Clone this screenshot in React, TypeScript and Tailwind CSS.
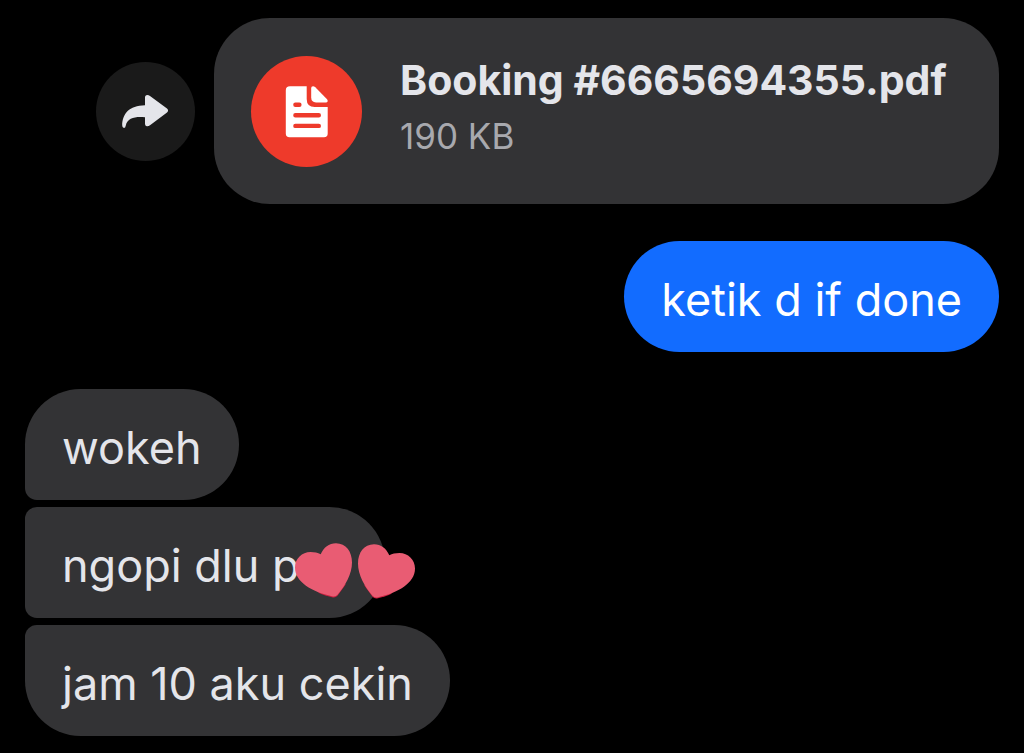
import type { ReactNode } from 'react';
import clsx from 'clsx';

interface BubbleProps {
  children: ReactNode;
  className?: string;
}

function ShareIcon() {
  return (
    <svg viewBox="12 14 48 35" className="h-[35px] w-12" fill="#e4e5ea" aria-hidden="true">
      <path d="M35 17.6Q35 15 37.3 15Q38.6 15 40 16L57 28.6Q59.2 30.5 57 32.5L40 45.3Q38.4 46.4 36.8 46.2Q35 45.8 35 44V37.2C26 36.2 17.4 37.5 15.8 45.5Q15.4 48 13.9 48Q12.2 48 12.2 45.2C12.4 34 19 25.4 35 25.2Z" />
    </svg>
  );
}

function DocumentIcon() {
  return (
    <svg viewBox="15 9 44 54" className="h-[54px] w-11" aria-hidden="true">
      <path
        fill="#fff"
        d="M20 11.3H36.7V24Q36.7 32 44.7 32H57.7V58.5Q57.7 62.3 54 62.3H19.6Q15.8 62.3 15.8 58.5V15.3Q15.8 11.3 20 11.3Z"
      />
      <path
        fill="#fff"
        d="M41.2 13Q41.2 11.3 43 11.3Q44.2 11.3 45.3 12.3L56.8 24Q57.7 25 57.7 26Q57.7 27.4 56.2 27.4H46Q41.2 27.4 41.2 22.6Z"
      />
      <path stroke="#ee3a2b" strokeWidth="4.4" strokeLinecap="round" d="M25.4 29.8H29.4M25.4 40.2H48.8M25.4 50.9H48.8" />
    </svg>
  );
}

function Heart() {
  return (
    <>
      <path fill="#c91f3f" d="M52 42L43.5 53.8Q41.5 56 38 55.2C33 54 28 52.5 24 50.5Z" />
      <path fill="#e95c73" d="M26.7 12.3C29.5 5.5 35 1.2 42 1.2C52 1.2 58 9.5 58 20.5C58 32 51.5 43.5 43.3 53Q41.5 55 38 54.2C18 50 1 40 1 25.5C1 16.5 8 10 16.500 10C20.500 10 23.800 10.800 26.700 12.300Z" />
    </>
  );
}

function HeartReaction() {
  return (
    <svg
      viewBox="0 0 122 57"
      className="absolute top-[35px] left-[269px] h-[57px] w-[122px]"
      role="img"
      aria-label="Two hearts"
    >
      <Heart />
      <g transform="translate(122 1) scale(-1 1)">
        <Heart />
      </g>
    </svg>
  );
}

function Bubble({ children, className }: BubbleProps) {
  return (
    <div className={clsx('relative w-fit px-[37px] pt-[31px] pb-[24px] text-[45px] leading-[56px]', className)}>
      {children}
    </div>
  );
}

function FileMessage() {
  return (
    <div className="flex items-center justify-end gap-[19px]">
      <button
        type="button"
        aria-label="Share file"
        className="flex size-[99px] shrink-0 items-center justify-center rounded-full bg-[#1a1a1a]"
      >
        <ShareIcon />
      </button>
      <div className="flex h-[186px] w-[785px] items-center gap-[38px] rounded-[56px] bg-[#333335] px-[37px]">
        <div className="flex size-[111px] shrink-0 items-center justify-center rounded-full bg-[#ee3a2b]">
          <DocumentIcon />
        </div>
        <div className="pb-1.5 whitespace-nowrap">
          <p className="text-[41px] leading-[56px] font-bold text-[#e4e5ea]">Booking #6665694355.pdf</p>
          <p className="text-[35px] leading-[56px] text-[#a8a9ae]">190 KB</p>
        </div>
      </div>
    </div>
  );
}

export default function App() {
  return (
    <main className="flex min-h-screen flex-col gap-[37px] bg-black px-[25px] pt-[18px] pb-4 font-['Inter',sans-serif]">
      <FileMessage />

      <Bubble className="self-end rounded-[56px] bg-[#126cff] text-white">ketik d if done</Bubble>

      <div className="flex flex-col gap-[7px] text-[#e4e5ea]">
        <Bubble className="rounded-[56px] rounded-bl-[12px] bg-[#333335]">wokeh</Bubble>
        <Bubble className="min-w-[360px] rounded-r-[56px] rounded-l-[12px] bg-[#333335]">
          ngopi dlu p
          <HeartReaction />
        </Bubble>
        <Bubble className="rounded-[56px] rounded-tl-[12px] bg-[#333335]">jam 10 aku cekin</Bubble>
      </div>
    </main>
  );
}
